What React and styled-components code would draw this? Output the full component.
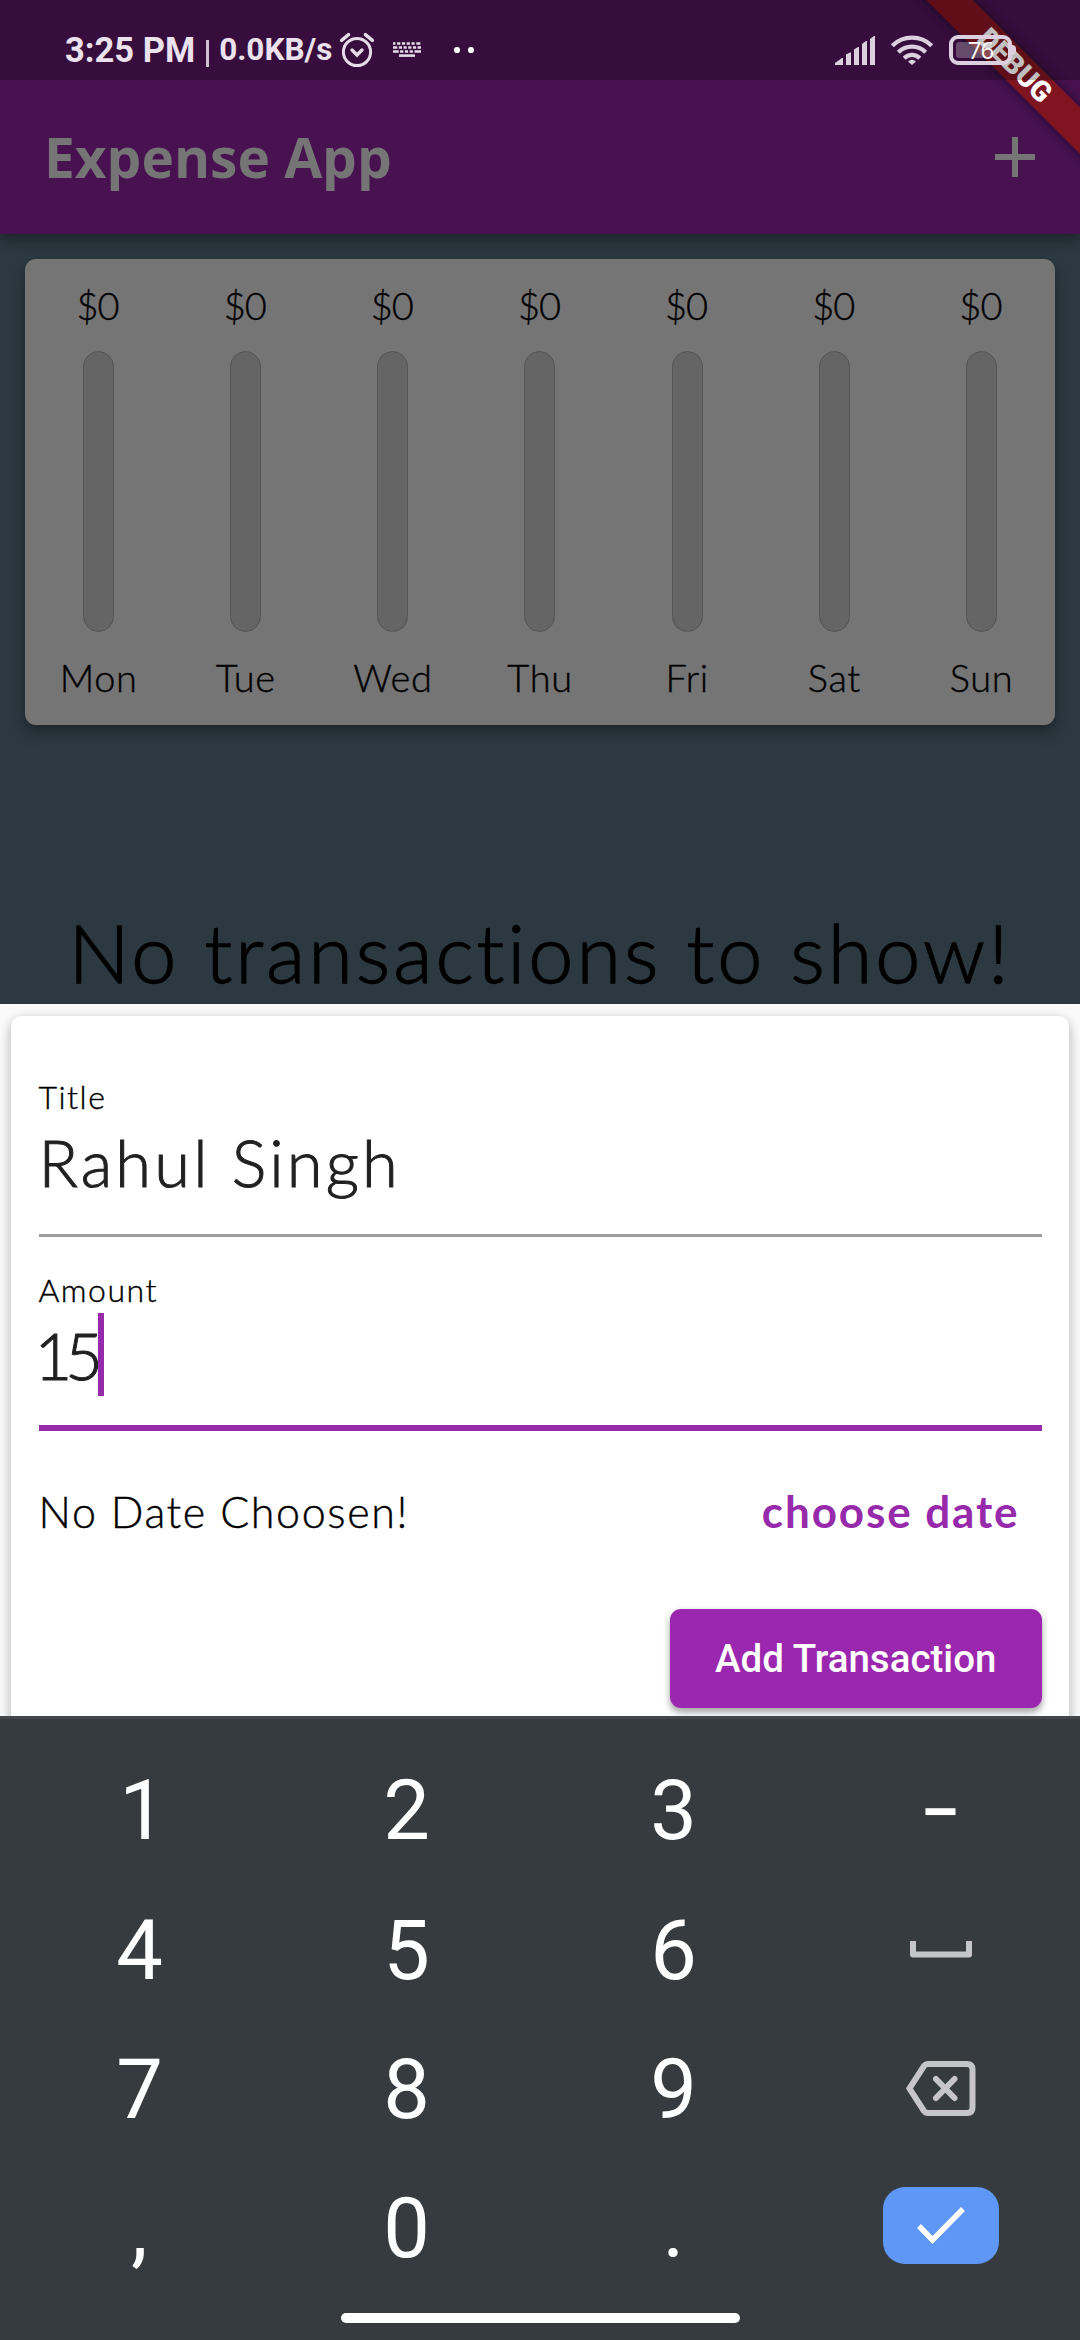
import React from "react";
import styled, { createGlobalStyle, css } from "styled-components";

const GlobalStyle = createGlobalStyle`
  *, *::before, *::after { box-sizing: border-box; }
  html, body { margin: 0; padding: 0; background: #2c3940; }
`;

const rounded = css`
  font-family: Lato, "Open Sans", sans-serif;
  font-weight: 300;
  -webkit-text-stroke: 0.4px currentColor;
`;

const Screen = styled.div`
  position: relative;
  width: 1080px;
  height: 2340px;
  overflow: hidden;
  display: flex;
  flex-direction: column;
  background: #2c3940;
  font-family: Roboto, sans-serif;
`;

const Header = styled.header`
  height: 234px;
  flex: none;
  background: #481251;
  box-shadow: 0 4px 12px rgba(0, 0, 0, 0.3), 0 8px 14px rgba(0, 0, 0, 0.12);
`;

const StatusBar = styled.div`
  position: relative;
  z-index: 2;
  height: 80px;
  display: flex;
  align-items: flex-start;
  justify-content: space-between;
  padding: 30px 68px 0 65px;
  background: rgba(0, 0, 0, 0.25);
  color: #ece2ee;
`;

const StatusGroup = styled.div`
  display: flex;
  align-items: center;
  height: 40px;
`;

const Clock = styled.span`
  font-size: 34.5px;
  font-weight: 700;
  line-height: 40px;
`;

const Speed = styled(Clock)`
  font-size: 31.5px;
  margin-left: 10px;
`;

const Divider = styled.span`
  width: 3px;
  height: 27px;
  margin: 6px 0 0 11px;
  background: #cfc2d1;
`;

const Glyph = styled.svg`
  display: block;
  flex: none;
  overflow: visible;
  margin-left: ${(p) => p.$left || 0}px;
`;

const Battery = styled.div`
  position: relative;
  display: flex;
  align-items: center;
  justify-content: center;
  width: 63px;
  height: 30px;
  margin-left: 16px;
  border: 4px solid #dccfdf;
  border-radius: 9px;
  color: #ffffff;
  font-family: "Open Sans", sans-serif;
  font-size: 24px;
  font-weight: 500;
  line-height: 24px;
  letter-spacing: -1px;
  &::before {
    content: "";
    position: absolute;
    left: 3px;
    top: 3px;
    width: 36px;
    height: 16px;
    border-radius: 3px;
    background: rgba(255, 255, 255, 0.26);
  }
  &::after {
    content: "";
    position: absolute;
    right: -8px;
    top: 6px;
    width: 4px;
    height: 10px;
    border-radius: 0 4px 4px 0;
    background: #dccfdf;
  }
`;

const Level = styled.span`
  position: relative;
`;

const BannerCorner = styled.div`
  position: absolute;
  z-index: 1;
  top: 0;
  right: 0;
  width: 220px;
  height: 220px;
  overflow: hidden;
`;

const Banner = styled.div`
  position: absolute;
  left: 5px;
  top: 49px;
  width: 300px;
  height: 33px;
  transform: rotate(45deg);
  display: flex;
  align-items: center;
  justify-content: center;
  background: #801521;
  box-shadow: 0 0 12px rgba(0, 0, 0, 0.5);
  color: #ffffff;
  font-size: 28.5px;
  font-weight: 900;
  line-height: 33px;
`;

const Toolbar = styled.div`
  display: flex;
  align-items: center;
  justify-content: space-between;
  height: 154px;
  padding: 0 45px 0 44px;
`;

const AppTitle = styled.h1`
  margin: 0;
  font-family: "Open Sans", sans-serif;
  font-size: 55px;
  font-weight: 700;
  line-height: 76px;
  color: #757575;
`;

const ChartCard = styled.section`
  display: flex;
  height: 466px;
  margin: 25px 25px 0;
  flex: none;
  border-radius: 11px;
  background: #757575;
  box-shadow: 0 8px 16px rgba(0, 0, 0, 0.26), 0 3px 6px rgba(0, 0, 0, 0.14);
`;

const DayColumn = styled.div`
  ${rounded}
  flex: 1;
  display: flex;
  flex-direction: column;
  align-items: center;
  padding-top: 22px;
  font-size: 38px;
  line-height: 48px;
  color: #000000;
`;

const Amount = styled.span`
  letter-spacing: -1px;
  padding-right: 2px;
`;

const DayName = styled.span`
  letter-spacing: 0.6px;
`;

const Bar = styled.div`
  width: 31px;
  height: 281px;
  margin: 22px 0 21px;
  border: 1.4px solid #555555;
  border-radius: 16px;
  background: #656565;
`;

const EmptyMessage = styled.p`
  ${rounded}
  -webkit-text-stroke-width: 1.3px;
  margin: 178px 0 0;
  flex: none;
  text-align: center;
  white-space: nowrap;
  font-size: 81px;
  line-height: 98px;
  height: 101px;
  letter-spacing: 3px;
  color: #000000;
`;

const Sheet = styled.section`
  flex: none;
  height: 712px;
  overflow: hidden;
  padding: 12px 11px 0;
  background: #fafafa;
`;

const FormCard = styled.form`
  display: flex;
  flex-direction: column;
  height: 760px;
  padding: 53px 27.5px 0;
  border-radius: 11px;
  background: #ffffff;
  box-shadow: 0 6px 14px rgba(0, 0, 0, 0.22), 0 1px 10px rgba(0, 0, 0, 0.1);
`;

const Field = styled.div`
  ${rounded}
  display: flex;
  flex-direction: column;
  height: ${(p) => (p.$focused ? 194 : 168)}px;
  padding-top: ${(p) => (p.$focused ? 25 : 0)}px;
  border-bottom: ${(p) => (p.$focused ? "6px solid #962aab" : "3px solid #9e9e9e")};
`;

const Label = styled.label`
  height: 51px;
  line-height: 56px;
  font-size: 32px;
  letter-spacing: 1.5px;
  color: #000000;
`;

const Value = styled.div`
  display: flex;
  align-items: center;
  height: 83px;
  font-size: 65px;
  -webkit-text-stroke-width: 1px;
  letter-spacing: ${(p) => p.$spacing}px;
  text-indent: ${(p) => p.$indent || 0}px;
  color: #212121;
`;

const Caret = styled.span`
  width: 6px;
  height: 83px;
  margin-left: 2px;
  background: #962aab;
`;

const DateRow = styled.div`
  ${rounded}
  display: flex;
  align-items: center;
  justify-content: space-between;
  height: 132px;
  margin-top: 14px;
  padding-right: 22px;
  font-size: 43px;
  color: #000000;
`;

const DateText = styled.span`
  letter-spacing: 1.6px;
`;

const ChooseDate = styled.span`
  font-weight: 700;
  font-size: 44px;
  letter-spacing: 1.9px;
  -webkit-text-stroke-width: 0;
  color: #962aab;
`;

const SubmitButton = styled.button`
  align-self: flex-end;
  width: 371.5px;
  height: 98.5px;
  margin: 32px 0 0;
  padding: 0;
  border: 0;
  border-radius: 11px;
  background: #9b27af;
  box-shadow: 0 5px 6px rgba(0, 0, 0, 0.26), 0 2px 8px rgba(0, 0, 0, 0.14);
  color: #ffffff;
  font-family: Roboto, sans-serif;
  font-size: 38.5px;
  font-weight: 500;
`;

const Keyboard = styled.section`
  flex: 1;
  display: flex;
  flex-direction: column;
  align-items: center;
  padding-top: 21.5px;
  border-top: 3px solid #42474b;
  background: #363b3f;
`;

const Keys = styled.div`
  display: grid;
  grid-template-columns: repeat(4, 267px);
  grid-auto-rows: 139.4px;
  color: #ffffff;
`;

const Key = styled.div`
  display: flex;
  align-items: center;
  justify-content: center;
  padding-top: 2px;
  padding-left: ${(p) => p.$shift || 0}px;
  font-size: 83px;
  line-height: 100px;
`;

const SymbolKey = styled(Key)`
  padding-top: 6px;
  font-size: 72px;
  font-weight: 500;
`;

const IconKey = styled(Key)`
  padding-top: 0;
`;

const EnterKey = styled.div`
  display: flex;
  align-items: center;
  justify-content: center;
  width: 116px;
  height: 77px;
  margin-bottom: 6px;
  border-radius: 22px;
  background: #5e97f6;
`;

const HomeIndicator = styled.div`
  width: 399px;
  height: 10px;
  margin-top: 15px;
  border-radius: 5px;
  background: #ffffff;
`;

const AlarmIcon = () => (
  <Glyph $left={8} width="34" height="34" viewBox="0 0 34 34" fill="none" stroke="#e6dbe8" strokeWidth="3" strokeLinecap="round">
    <circle cx="17" cy="19" r="13.6" />
    <path d="M1.600 7.400 8.600 1.600M32.400 7.400 25.400 1.600" strokeWidth="3.400" />
    <path d="m12 17 5 5 5-5" strokeWidth="3.400" />
  </Glyph>
);

const KeyboardIcon = () => (
  <Glyph $left={19} width="28" height="16" viewBox="0 0 28 16" stroke="#e6dbe8" fill="none">
    <path d="M0 1.400h28" strokeWidth="2.500" strokeDasharray="2.500 1.600 3.200 1.600 3.200 1.600 3.200 1.600 3.200 1.600 4 1" />
    <path d="M0 5.400h28" strokeWidth="2.500" strokeDasharray="4.300 1.500 3.200 1.500 3.200 1.500 3.200 1.500 3.200 1.500 4 1" />
    <path d="M0 9.400h28" strokeWidth="2.500" strokeDasharray="5.800 1.300 3.200 1.600 3.200 1.600 3.200 1.600 6.500 1" />
    <path d="M6 13.600h16" strokeWidth="2.600" />
  </Glyph>
);

const DotsIcon = () => (
  <Glyph $left={33} width="20" height="6" viewBox="0 0 20 6" fill="#ffffff">
    <circle cx="3" cy="3" r="3.1" />
    <circle cx="17" cy="3" r="3.1" />
  </Glyph>
);

const SignalIcon = () => (
  <Glyph width="40" height="29" viewBox="0 0 40 29" fill="#dccfdf">
    <path d="M0 29v-2l7-5h1v7zM11 29V18.500l4-2h1V29zM19 29V13.500l4-2.500h1v18zM27 29V8l4-3h1v24zM35 29V3l4-3h1v29z" />
  </Glyph>
);

const WifiIcon = () => (
  <Glyph $left={16} width="42" height="30" viewBox="0 0 42 30" fill="none" stroke="#dccfdf" strokeWidth="4.200">
    <path d="M1.300 10.800a28 28 0 0 1 39.400 0" />
    <path d="M7.300 17.200a19.400 19.400 0 0 1 27.400 0" />
    <path d="M13.200 23.200a11 11 0 0 1 15.600 0" />
    <path d="M17 26.500q4-3.400 8 0L21 30z" fill="#dccfdf" stroke="none" />
  </Glyph>
);

const PlusIcon = () => (
  <Glyph width="40" height="40" viewBox="0 0 40 40" stroke="#757575" strokeWidth="6">
    <path d="M0 20h40M20 0v40" />
  </Glyph>
);

const SpaceIcon = () => (
  <Glyph width="62" height="17" viewBox="0 0 62 17" fill="none" stroke="#c6c6c8" strokeWidth="6">
    <path d="M3 0v13.500h56V0" strokeLinejoin="round" />
  </Glyph>
);

const BackspaceIcon = () => (
  <Glyph width="70" height="55" viewBox="0 0 70 55" fill="none" stroke="#c6c6c8" strokeWidth="6">
    <path d="M22 3h39q5.500 0 5.500 5.500v38q0 5.500-5.500 5.500H22q-2.500 0-4.200-2.300L3.500 27.500 17.800 5.300Q19.500 3 22 3z" />
    <path d="m30 18 18.500 19M48.500 18 30 37" strokeLinecap="round" />
  </Glyph>
);

const CheckIcon = () => (
  <Glyph width="48" height="37" viewBox="0 0 48 37" fill="none" stroke="#ffffff" strokeWidth="5.500">
    <path d="m2 19 13.500 14L46 2" />
  </Glyph>
);

const days = ["Mon", "Tue", "Wed", "Thu", "Fri", "Sat", "Sun"];

export default function App() {
  return (
    <>
      <GlobalStyle />
      <Screen>
        <Header>
          <StatusBar>
            <StatusGroup>
              <Clock>3:25 PM</Clock>
              <Divider />
              <Speed>0.0KB/s</Speed>
              <AlarmIcon />
              <KeyboardIcon />
              <DotsIcon />
            </StatusGroup>
            <StatusGroup>
              <SignalIcon />
              <WifiIcon />
              <Battery>
                <Level>76</Level>
              </Battery>
            </StatusGroup>
          </StatusBar>
          <Toolbar>
            <AppTitle>Expense App</AppTitle>
            <PlusIcon />
          </Toolbar>
        </Header>
        <BannerCorner>
          <Banner>DEBUG</Banner>
        </BannerCorner>
        <ChartCard>
          {days.map((day) => (
            <DayColumn key={day}>
              <Amount>$0</Amount>
              <Bar />
              <DayName>{day}</DayName>
            </DayColumn>
          ))}
        </ChartCard>
        <EmptyMessage>No transactions to show!</EmptyMessage>
        <Sheet>
          <FormCard>
            <Field>
              <Label>Title</Label>
              <Value $spacing={3.2}>Rahul Singh</Value>
            </Field>
            <Field $focused>
              <Label>Amount</Label>
              <Value $spacing={-7} $indent={-4}>
                15
                <Caret />
              </Value>
            </Field>
            <DateRow>
              <DateText>No Date Choosen!</DateText>
              <ChooseDate>choose date</ChooseDate>
            </DateRow>
            <SubmitButton type="button">Add Transaction</SubmitButton>
          </FormCard>
        </Sheet>
        <Keyboard>
          <Keys>
            <Key $shift={6}>1</Key>
            <Key>2</Key>
            <Key>3</Key>
            <SymbolKey>−</SymbolKey>
            <Key>4</Key>
            <Key>5</Key>
            <Key>6</Key>
            <IconKey><SpaceIcon /></IconKey>
            <Key>7</Key>
            <Key>8</Key>
            <Key>9</Key>
            <IconKey><BackspaceIcon /></IconKey>
            <Key>,</Key>
            <Key>0</Key>
            <Key>.</Key>
            <IconKey><EnterKey><CheckIcon /></EnterKey></IconKey>
          </Keys>
          <HomeIndicator />
        </Keyboard>
      </Screen>
    </>
  );
}
